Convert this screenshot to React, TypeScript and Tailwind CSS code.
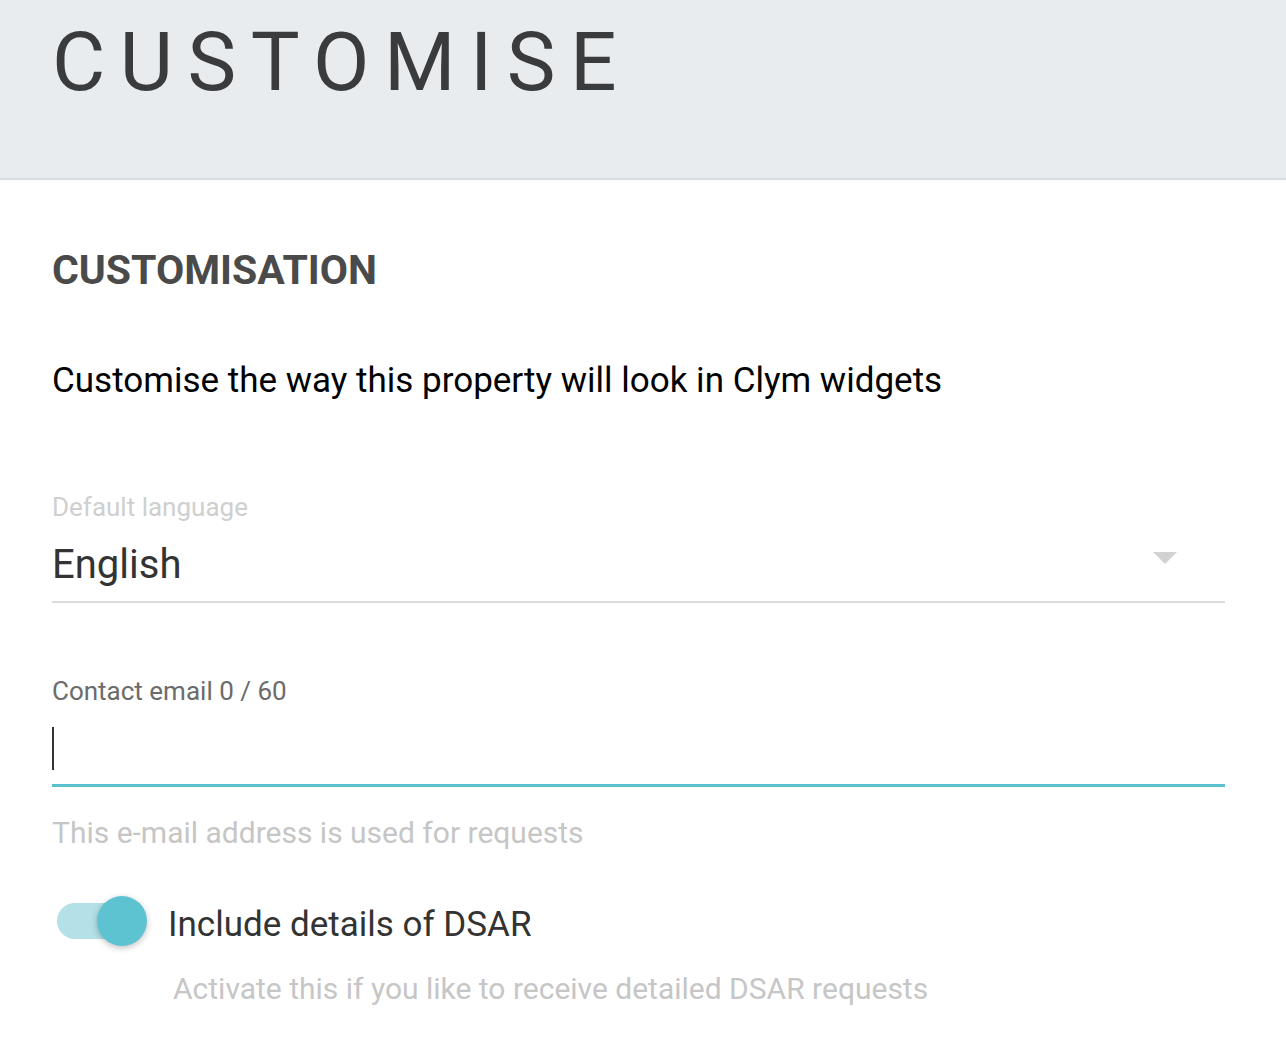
export default function App() {
  return (
    <div className="min-h-screen bg-white font-['Roboto',_'Liberation_Sans',_sans-serif]">
      <header className="h-[180px] bg-[#e8ecef] border-b-2 border-[#d6dee2] pl-[52px] pt-[21px]">
        <h1 className="text-[82px] leading-none font-normal tracking-[14.5px] text-[#3a3b3d]">CUSTOMISE</h1>
      </header>

      <main className="pl-[52px] pr-[61px]">
        <h2 className="mt-[70px] text-[41px] leading-none font-bold text-[#4a4a4a]">CUSTOMISATION</h2>

        <p className="mt-[72px] text-[35px] leading-none text-black">
          Customise the way this property will look in Clym widgets
        </p>

        <div className="mt-[96px]">
          <label className="block text-[26px] leading-none text-[#cfcfcf]">Default language</label>
          <div className="mt-[25px] flex items-center justify-between border-b-2 border-[#dadada] pb-[16px]">
            <span className="text-[40px] leading-none text-[#333333]">English</span>
            <svg width="24" height="12" viewBox="0 0 24 12" className="mr-[48px] -mt-[14px]">
              <polygon points="0,0 24,0 12,12" fill="#d2d2d2" />
            </svg>
          </div>
        </div>

        <div className="mt-[75px]">
          <label className="block text-[26px] leading-none text-[#6b6b6b]">Contact email 0 / 60</label>
          <div className="mt-[20px] h-[63px] border-b-[3px] border-[#5bc0ce] flex items-start">
            <span className="mt-[3px] w-[2px] h-[43px] bg-[#333333]" />
          </div>
          <p className="mt-[31px] text-[30px] leading-none text-[#c6c6c6]">This e-mail address is used for requests</p>
        </div>

        <div className="mt-[48px] flex items-center">
          <div className="relative ml-[5px] w-[90px] h-[50px] flex items-center">
            <div className="w-[78px] h-[36px] rounded-full bg-[#b3e1e7]" />
            <div className="absolute left-[40px] top-0 w-[50px] h-[50px] rounded-full bg-[#5ec3d1] shadow-[0_2px_6px_rgba(0,0,0,0.25)]" />
          </div>
          <span className="ml-[21px] mt-[6px] text-[35px] leading-none text-[#333333]">Include details of DSAR</span>
        </div>
        <p className="mt-[28px] ml-[121px] text-[30px] leading-none text-[#c6c6c6]">
          Activate this if you like to receive detailed DSAR requests
        </p>
      </main>
    </div>
  );
}
